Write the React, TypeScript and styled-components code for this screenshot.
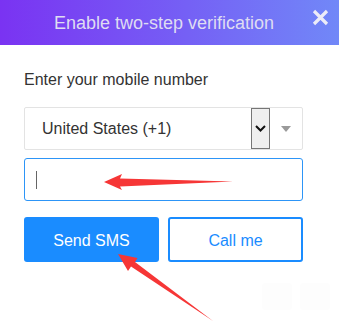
import React from "react";
import styled, { createGlobalStyle } from "styled-components";

const Global = createGlobalStyle`
  html, body { margin: 0; padding: 0; background: #fff; }
  body { font-family: Arial, "Liberation Sans", sans-serif; width: 339px; height: 328px; overflow: hidden; }
`;

const Page = styled.div`
  position: relative;
  width: 339px;
  height: 328px;
  background: #fff;
`;

const Header = styled.div`
  height: 45px;
  background: linear-gradient(90deg, #7a33f2 0%, #7560f5 55%, #7188f8 100%);
  display: flex;
  align-items: center;
  position: relative;
`;

const Title = styled.div`
  flex: 1;
  padding-left: 54px;
  font-size: 18px;
  color: #dedcf2;
  line-height: 20px;
  padding-top: 1px;
`;

const Close = styled.div`
  position: absolute;
  right: 10px;
  top: 9px;
  width: 17px;
  height: 17px;
`;

const Body = styled.div`
  padding: 26px 36px 0 24px;
  display: flex;
  flex-direction: column;
`;

const Label = styled.div`
  font-size: 16px;
  color: #333;
  line-height: 18px;
  height: 18px;
`;

const SelectBox = styled.div`
  margin-top: 18px;
  height: 41px;
  border: 1px solid #e3e3e3;
  border-radius: 2px;
  display: flex;
  align-items: stretch;
`;

const SelectText = styled.div`
  flex: 1;
  padding-left: 17px;
  font-size: 16px;
  color: #333;
  display: flex;
  align-items: center;
  padding-top: 1px;
`;

const NativeArrow = styled.div`
  width: 17px;
  background: #efefef;
  border: 1px solid #767676;
  display: flex;
  align-items: center;
  justify-content: center;
`;

const Caret = styled.div`
  width: 32px;
  display: flex;
  align-items: center;
  justify-content: center;
`;

const Input = styled.div`
  margin-top: 8px;
  height: 41px;
  border: 1px solid #2d95f7;
  border-radius: 3px;
  display: flex;
  align-items: center;
  padding-left: 11px;
`;

const Cursor = styled.div`
  width: 1px;
  height: 18px;
  background: #666;
`;

const Buttons = styled.div`
  margin-top: 16px;
  display: grid;
  grid-template-columns: 135px 135px;
  column-gap: 9px;
`;

const Button = styled.div<{ $primary?: boolean }>`
  height: 45px;
  box-sizing: border-box;
  border-radius: 3px;
  display: flex;
  align-items: center;
  justify-content: center;
  font-size: 16px;
  padding-top: 2px;
  background: ${(p) => (p.$primary ? "#1a8cff" : "#fff")};
  color: ${(p) => (p.$primary ? "#fff" : "#1a8cff")};
  border: ${(p) => (p.$primary ? "none" : "2px solid #1a8cff")};
`;

const Ghosts = styled.div`
  position: absolute;
  left: 262px;
  top: 283px;
  display: flex;
  gap: 8px;
`;

const Ghost = styled.div`
  width: 30px;
  height: 27px;
  background: #fdfdfd;
  border-radius: 3px;
`;

const Overlay = styled.svg`
  position: absolute;
  left: 0;
  top: 0;
  pointer-events: none;
`;

export default function App() {
  return (
    <Page>
      <Global />
      <Header>
        <Title>Enable two-step verification</Title>
        <Close>
          <svg width="17" height="17" viewBox="0 0 17 17">
            <path d="M2 2 L15 15 M15 2 L2 15" stroke="#ececf8" strokeWidth="3.2" strokeLinecap="butt" />
          </svg>
        </Close>
      </Header>
      <Body>
        <Label>Enter your mobile number</Label>
        <SelectBox>
          <SelectText>United States (+1)</SelectText>
          <NativeArrow>
            <svg width="11" height="7" viewBox="0 0 11 7">
              <path d="M1 1 L5.5 5.5 L10 1" stroke="#111" strokeWidth="2" fill="none" />
            </svg>
          </NativeArrow>
          <Caret>
            <svg width="10" height="6" viewBox="0 0 10 6">
              <path d="M0 0 H10 L5 6 Z" fill="#9a9a9a" />
            </svg>
          </Caret>
        </SelectBox>
        <Input>
          <Cursor />
        </Input>
        <Buttons>
          <Button $primary>Send SMS</Button>
          <Button>Call me</Button>
        </Buttons>
      </Body>
      <Ghosts>
        <Ghost />
        <Ghost />
      </Ghosts>
      <Overlay width="339" height="328" viewBox="0 0 339 328">
        <polygon points="104,182 122,174 120,178.5 233,181.5 120,186.5 122,190" fill="#f63636" />
        <polygon points="118,254 128,271 131,266.5 213,321 135,262 137.5,258" fill="#f63636" />
      </Overlay>
    </Page>
  );
}
